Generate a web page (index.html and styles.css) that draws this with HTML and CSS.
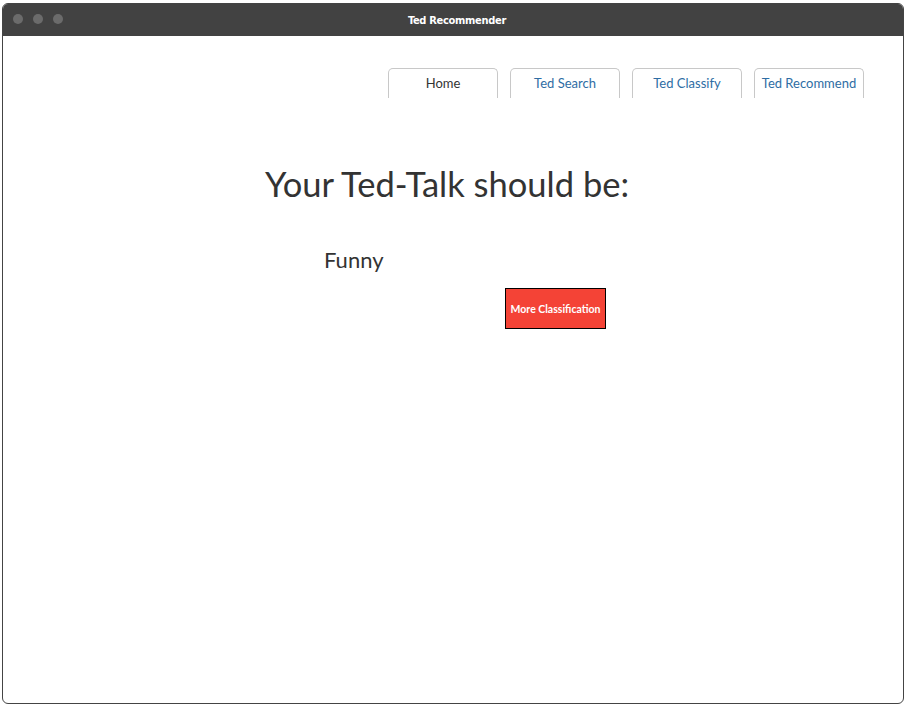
FILE: index.html
```html
<!DOCTYPE html>
<html>
<head>
<meta charset="utf-8">
<link rel="stylesheet" href="styles.css">
</head>
<body>
<div class="window">
  <div class="titlebar">
    <div class="dots"><span class="dot"></span><span class="dot"></span><span class="dot"></span></div>
    <div class="title">Ted Recommender</div>
  </div>
  <div class="content">
    <nav class="tabs">
      <a class="tab active">Home</a>
      <a class="tab">Ted Search</a>
      <a class="tab">Ted Classify</a>
      <a class="tab">Ted Recommend</a>
    </nav>
    <h1 class="heading">Your Ted-Talk should be:</h1>
    <div class="result">Funny</div>
    <div class="actions"><button class="btn">More Classification</button></div>
  </div>
</div>
</body>
</html>
```
FILE: styles.css
```css
html, body { margin: 0; padding: 0; background: #fff; }
body { font-family: Lato, "Open Sans", sans-serif; }
.window {
  margin: 3px 3px 3px 2px;
  height: 701px;
  border: 1px solid #444;
  border-radius: 6px;
  overflow: hidden;
  box-sizing: border-box;
  display: flex;
  flex-direction: column;
}
.titlebar {
  height: 32px;
  background: #424242;
  position: relative;
  display: flex;
  align-items: center;
  justify-content: center;
  flex-shrink: 0;
}
.dots { position: absolute; left: 10px; top: 10px; display: flex; gap: 10px; }
.dot { width: 10px; height: 10px; border-radius: 50%; background: #6b6b6b; }
.title { color: #fff; font-family: "DejaVu Sans Condensed", "DejaVu Sans", sans-serif; font-size: 11px; font-weight: 600; letter-spacing: -0.3px; padding-left: 8px; }
.content { flex: 1; }
.tabs { display: flex; justify-content: flex-end; gap: 12px; padding: 32px 39px 0 0; }
.tab {
  width: 110px; height: 30px; box-sizing: border-box;
  border: 1px solid #c8c8c8; border-bottom: none;
  border-radius: 5px 5px 0 0;
  display: flex; align-items: center; justify-content: center;
  font-size: 13px; color: #2e6da4; padding-bottom: 1px;
}
.tab.active { color: #333; }
.heading { margin: 66px 0 0 0; text-align: center; font-weight: normal; font-size: 34.5px; color: #333; line-height: 40px; padding-right: 12px; }
.result { margin: 43px 0 0 321px; font-size: 22px; color: #333; line-height: 26px; }
.actions { margin: 15px 0 0 502px; }
.btn {
  width: 101px; height: 41px; background: #f44336; border: 1px solid #000;
  color: #fff; font-family: Lato, sans-serif; font-weight: bold; font-size: 10.5px; padding: 0;
}
```
